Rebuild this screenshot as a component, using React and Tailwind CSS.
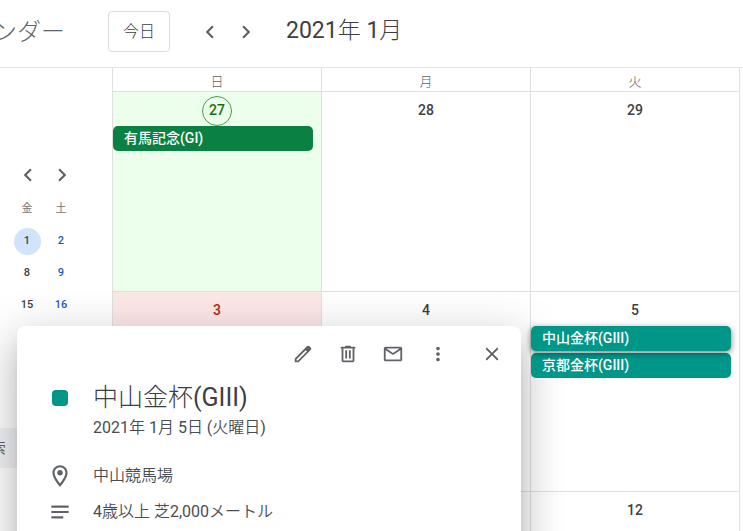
/**
 * Month view of the calendar: top bar, mini calendar sidebar, month grid
 * and the detail popup of the selected event.
 */
import { useState } from "react";

const DAYS = ["日", "月", "火"];

const WEEKS = [
  [
    { day: 27, today: true, events: [{ title: "有馬記念(GI)", color: "bg-[#0b8043]" }] },
    { day: 28 },
    { day: 29 },
  ],
  [
    { day: 3, holiday: true },
    { day: 4 },
    {
      day: 5,
      events: [
        { title: "中山金杯(GIII)", color: "bg-[#009688]", selected: true },
        { title: "京都金杯(GIII)", color: "bg-[#009688]" },
      ],
    },
  ],
  [{}, {}, { day: 12 }],
];

const MINI_WEEKS = [
  [1, 2],
  [8, 9],
  [15, 16],
];

const ICONS = {
  left: "M15.41 7.41 14 6l-6 6 6 6 1.41-1.41L10.83 12z",
  right: "M10 6 8.59 7.41 13.17 12l-4.58 4.59L10 18l6-6z",
  edit: "M20.41 4.94l-1.35-1.35c-.78-.78-2.05-.78-2.83 0L3 16.82V21h4.18L20.41 7.77c.79-.78.79-2.05 0-2.83zM6.41 19.06 5 19v-1.36l9.82-9.82 1.41 1.41-9.82 9.83z",
  trash:
    "M15 4V3H9v1H4v2h1v13c0 1.1.9 2 2 2h10c1.1 0 2-.9 2-2V6h1V4h-5zm2 15H7V6h10v13zM9 8h2v9H9zm4 0h2v9h-2z",
  mail: "M20 4H4c-1.1 0-2 .9-2 2v12c0 1.1.9 2 2 2h16c1.1 0 2-.9 2-2V6c0-1.1-.9-2-2-2zm-.8 2L12 10.8 4.8 6h14.4zM4 18V7.87l8 5.33 8-5.33V18H4z",
  more: "M12 8c1.1 0 2-.9 2-2s-.9-2-2-2-2 .9-2 2 .9 2 2 2zm0 2c-1.1 0-2 .9-2 2s.9 2 2 2 2-.9 2-2-.9-2-2-2zm0 6c-1.1 0-2 .9-2 2s.9 2 2 2 2-.9 2-2-.9-2-2-2z",
  close:
    "M19 6.41 17.59 5 12 10.59 6.41 5 5 6.41 10.59 12 5 17.59 6.41 19 12 13.41 17.59 19 19 17.59 13.41 12z",
  place:
    "M12 2C8.13 2 5 5.13 5 9c0 5.25 7 13 7 13s7-7.75 7-13c0-3.87-3.13-7-7-7zM7 9c0-2.76 2.24-5 5-5s5 2.24 5 5c0 2.88-2.88 7.19-5 9.88C9.92 16.21 7 11.85 7 9zm5-2.5a2.5 2.5 0 1 0 0 5 2.5 2.5 0 0 0 0-5z",
  notes: "M20 11H4v2h16zM4 16h11v2H4zM20 6H4v2h16z",
};

function Icon({ name, className = "size-6" }) {
  return (
    <svg viewBox="0 0 24 24" fill="currentColor" className={`shrink-0 ${className}`} aria-hidden="true">
      <path d={ICONS[name]} />
    </svg>
  );
}

function IconButton({ icon, label, onClick, className = "", iconClass = "size-[26px]" }) {
  return (
    <button
      onClick={onClick}
      aria-label={label}
      className={`flex items-center justify-center rounded-full hover:bg-gray-500/10 ${className}`}
    >
      <Icon name={icon} className={iconClass} />
    </button>
  );
}

function TopBar() {
  return (
    <header className="flex h-[68px] shrink-0 items-center border-b border-[#e4e6e9] pb-1 font-[Roboto,'Noto_Sans_CJK_JP_Light','Noto_Sans_CJK_JP',sans-serif] text-[#5f6368]">
      <div className="flex w-[108px] justify-end overflow-hidden pr-[43px]">
        <span className="whitespace-nowrap text-2xl">カレンダー</span>
      </div>
      <button className="h-[41px] w-[62px] rounded border border-[#dadce0] text-base text-[#3c4043]">
        今日
      </button>
      <div className="ml-6 flex gap-1">
        <IconButton icon="left" label="前の月" className="size-8" />
        <IconButton icon="right" label="次の月" className="size-8" />
      </div>
      <h1 className="ml-6 text-[23px] text-[#3c4043]">2021年 1月</h1>
    </header>
  );
}

function Sidebar() {
  return (
    <aside className="w-28 shrink-0 overflow-hidden pt-[91px]">
      <div className="ml-[13px] flex gap-1 text-[#5f6368]">
        <IconButton icon="left" label="前の月" className="h-8 w-[30px]" />
        <IconButton icon="right" label="次の月" className="h-8 w-[30px]" />
      </div>
      <table className="ml-[10px] mt-[2px] w-[68px] table-fixed text-center text-[11px] font-medium text-[#3c4043]">
        <thead>
          <tr className="h-8 text-[#70757a]">
            <th className="font-normal">金</th>
            <th className="font-normal">土</th>
          </tr>
        </thead>
        <tbody>
          {MINI_WEEKS.map(([fri, sat]) => (
            <tr key={fri} className="h-8">
              <td>
                <span
                  className={`mx-auto flex size-[27px] items-center justify-center rounded-full ${fri === 1 ? "bg-[#d2e3fc]" : ""}`}
                >
                  {fri}
                </span>
              </td>
              <td className="text-[#185abc]">{sat}</td>
            </tr>
          ))}
        </tbody>
      </table>
      <input
        type="text"
        aria-label="ユーザーを検索"
        placeholder="ユーザーを検索"
        className="-ml-[107px] mt-[107px] h-10 w-[211px] rounded bg-[#f1f3f4] pl-[15px] text-sm placeholder:text-[#5f6368]"
      />
    </aside>
  );
}

function EventChip({ event }) {
  return (
    <button
      className={`relative flex h-[25px] w-full items-center rounded-[5px] pl-[11px] text-[14px] font-medium text-white ${event.color} ${
        event.selected ? "z-30 shadow-[0_2px_6px_rgba(0,0,0,0.5)]" : "z-20"
      }`}
    >
      {event.title}
    </button>
  );
}

function DayCell({ cell }) {
  let bg = "";
  let text = "text-[#3c4043]";
  if (cell.today) {
    bg = "bg-[#ecfeec]";
    text = "text-[#1b6e0c]";
  } else if (cell.holiday) {
    bg = "bg-[#fde8e8]";
    text = "text-[#b3261e]";
  }
  return (
    <div className={`border-r border-b border-[#e0e0e0] ${bg}`}>
      <div className="flex h-[34px] items-center justify-center pt-[3px]">
        <span
          className={`flex size-[30px] items-center justify-center rounded-full text-[14px] font-medium ${text} ${
            cell.today ? "border border-[#4f9a45]" : ""
          }`}
        >
          {cell.day}
        </span>
      </div>
      <div className="flex flex-col gap-[2px] pr-2">
        {(cell.events || []).map((e) => (
          <EventChip key={e.title} event={e} />
        ))}
      </div>
    </div>
  );
}

function MonthGrid() {
  return (
    <main className="min-w-0 flex-1 border-l border-[#e0e0e0] pr-[3px]">
      <div className="grid grid-cols-3">
        {DAYS.map((d) => (
          <div
            key={d}
            className="flex h-6 items-center justify-center border-r border-b border-[#e0e0e0] pt-1 text-[13px] font-light text-[#5f6368]"
          >
            {d}
          </div>
        ))}
      </div>
      {WEEKS.map((week, i) => (
        <div key={i} className="grid h-[200px] grid-cols-3">
          {week.map((cell, j) => (
            <DayCell key={j} cell={cell} />
          ))}
        </div>
      ))}
    </main>
  );
}

function EventPopup({ onClose }) {
  return (
    <section
      role="dialog"
      aria-label="中山金杯(GIII)"
      className="absolute top-[326px] left-[17px] z-10 h-80 w-[504px] rounded-lg bg-white font-[Roboto,'Noto_Sans_CJK_JP_DemiLight','Noto_Sans_CJK_JP',sans-serif] text-[#4a4d51] shadow-[0_24px_38px_3px_rgba(0,0,0,0.14),0_9px_46px_8px_rgba(0,0,0,0.12),0_11px_15px_-7px_rgba(0,0,0,0.2)]"
    >
      <div className="flex justify-end pt-3 pr-3 text-[#5f6368]">
        <IconButton icon="edit" label="編集" className="h-8 w-[45px]" iconClass="size-[22px]" />
        <IconButton icon="trash" label="削除" className="h-8 w-[45px]" iconClass="size-[22px]" />
        <IconButton icon="mail" label="メール" className="h-8 w-[45px]" iconClass="size-[22px]" />
        <IconButton icon="more" label="オプション" className="h-8 w-[45px]" iconClass="size-[22px]" />
        <IconButton icon="close" label="閉じる" onClick={onClose} className="ml-[15px] h-8 w-[34px]" iconClass="size-[22px]" />
      </div>
      <div className="grid grid-cols-[26px_1fr] gap-x-5 pt-3 pl-[30px]">
        <div className="flex h-8 items-center justify-center">
          <span className="size-4 rounded bg-[#009688]" />
        </div>
        <div>
          <h2 className="font-[Roboto,'Noto_Sans_CJK_JP_Light','Noto_Sans_CJK_JP',sans-serif] text-[25px] leading-8 text-[#3c4043]">
            中山金杯(GIII)
          </h2>
          <p className="text-base leading-7">2021年 1月 5日 (火曜日)</p>
        </div>
        <div className="mt-4 flex h-9 items-center text-[#5f6368]">
          <Icon name="place" className="size-[26px]" />
        </div>
        <p className="mt-4 text-base leading-9">中山競馬場</p>
        <div className="flex h-9 items-center justify-center text-[#5f6368]">
          <Icon name="notes" className="size-[26px]" />
        </div>
        <p className="text-base leading-9">4歳以上 芝2,000メートル</p>
      </div>
    </section>
  );
}

export default function App() {
  const [open, setOpen] = useState(true);

  return (
    <div className="relative flex h-screen flex-col overflow-hidden bg-white font-[Roboto,'Noto_Sans_CJK_JP',sans-serif]">
      <TopBar />
      <div className="flex min-h-0 flex-1">
        <Sidebar />
        <MonthGrid />
      </div>
      {open && <EventPopup onClose={() => setOpen(false)} />}
    </div>
  );
}
